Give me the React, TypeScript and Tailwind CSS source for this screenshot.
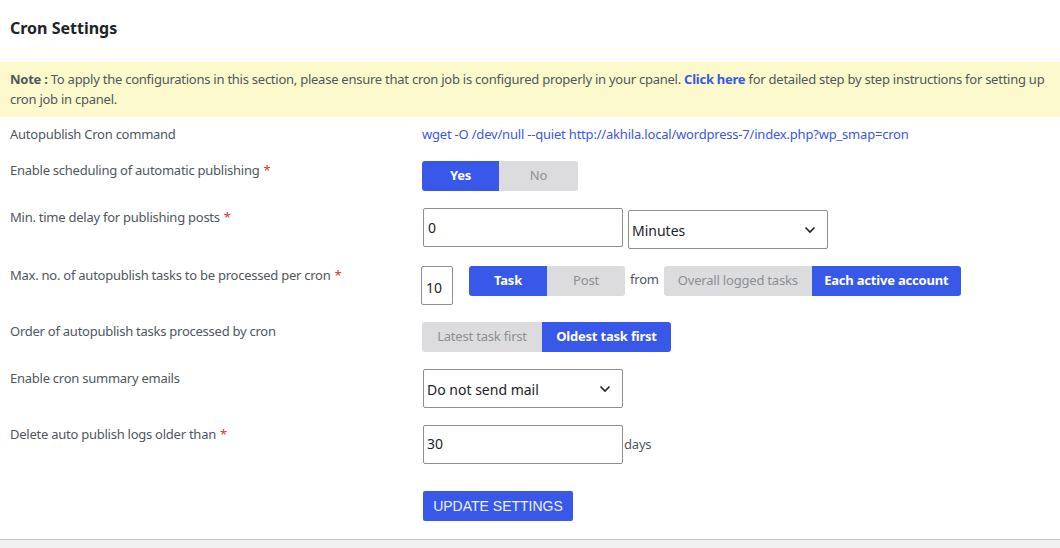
import React from "react";

const font = { fontFamily: '"Noto Sans", "Open Sans", sans-serif' };

function Chevron() {
  return (
    <svg width="12" height="8" viewBox="0 0 12 8" className="shrink-0">
      <path d="M1.5 1.5 L6 6 L10.5 1.5" fill="none" stroke="#1d2327" strokeWidth="1.6" />
    </svg>
  );
}

function Label({ text, req }: { text: string; req?: boolean }) {
  return (
    <div className="w-[422px] shrink-0 pl-[10px] text-[13px] leading-[18px] tracking-[-0.25px] text-[#50575e]">
      {text}
      {req && <span className="text-[#d63638] ml-[4px]">*</span>}
    </div>
  );
}

function Seg({ items, active, widths }: { items: string[]; active: number; widths: string[] }) {
  return (
    <div className="flex h-[30px] rounded-[3px] overflow-hidden shrink-0">
      {items.map((it, i) => (
        <div
          key={it}
          className={
            "flex items-center justify-center text-[13px] tracking-[-0.2px] " +
            widths[i] +
            " " +
            (i === active ? "bg-[#3858e9] text-white font-bold" : "bg-[#dcdcde] text-[#8c8f94]")
          }
        >
          {it}
        </div>
      ))}
    </div>
  );
}

export default function App() {
  return (
    <div className="w-[1060px] h-[548px] bg-white flex flex-col overflow-hidden" style={font}>
      <div className="h-[62px] pt-[18px] pl-[10px] text-[16px] leading-[20px] font-bold text-[#1d2327]">
        Cron Settings
      </div>
      <div className="bg-[#fcf9cd] h-[55px] pt-[7px] px-[10px] text-[13px] leading-[20px] tracking-[-0.25px] text-[#50575e]">
        <p>
          <b className="font-bold">Note :</b> To apply the configurations in this section, please ensure that cron job is configured properly in your cpanel. <b className="font-bold text-[#3858e9]">Click here</b> for detailed step by step instructions for setting up cron job in cpanel.
        </p>
      </div>

      <div className="flex flex-col pt-[8px]">
        <div className="flex items-start">
          <Label text="Autopublish Cron command" />
          <div className="text-[13px] leading-[18px] tracking-[-0.2px] text-[#3858e9]">
            wget -O /dev/null --quiet http://akhila.local/wordpress-7/index.php?wp_smap=cron
          </div>
        </div>

        <div className="flex items-start mt-[18px]">
          <Label text="Enable scheduling of automatic publishing" req />
          <Seg items={["Yes", "No"]} active={0} widths={["w-[77px]", "w-[79px]"]} />
        </div>

        <div className="flex items-start mt-[17px]">
          <Label text="Min. time delay for publishing posts" req />
          <div className="flex items-start ml-[1px]">
            <div className="w-[200px] h-[39px] border border-[#8c8f94] rounded-[2px] pl-[4px] flex items-center text-[14px] text-[#1d2327]">
              0
            </div>
            <div className="ml-[5px] mt-[2px] w-[200px] h-[39px] border border-[#8c8f94] rounded-[2px] pl-[3px] pr-[11px] flex items-center justify-between text-[14px] text-[#1d2327]">
              <span className="mt-[2px]">Minutes</span>
              <Chevron />
            </div>
          </div>
        </div>

        <div className="flex items-start mt-[17px]">
          <Label text="Max. no. of autopublish tasks to be processed per cron" req />
          <div className="flex items-start -ml-[1px]">
            <div className="w-[32px] h-[39px] border border-[#8c8f94] rounded-[2px] pl-[4px] flex items-center text-[14px] text-[#1d2327]">
              <span className="mt-[3px]">10</span>
            </div>
            <div className="ml-[16px]">
              <Seg items={["Task", "Post"]} active={0} widths={["w-[78px]", "w-[78px]"]} />
            </div>
            <div className="ml-[5px] h-[30px] flex items-center text-[13px] tracking-[-0.2px] text-[#50575e] -mt-[1px]">from</div>
            <div className="ml-[5px]">
              <Seg
                items={["Overall logged tasks", "Each active account"]}
                active={1}
                widths={["w-[148px]", "w-[149px]"]}
              />
            </div>
          </div>
        </div>

        <div className="flex items-start mt-[17px]">
          <Label text="Order of autopublish tasks processed by cron" />
          <Seg items={["Latest task first", "Oldest task first"]} active={1} widths={["w-[120px]", "w-[129px]"]} />
        </div>

        <div className="flex items-start mt-[17px]">
          <Label text="Enable cron summary emails" />
          <div className="ml-[1px] w-[200px] h-[39px] border border-[#8c8f94] rounded-[2px] pl-[3px] pr-[11px] flex items-center justify-between text-[14px] text-[#1d2327]">
            <span className="mt-[2px]">Do not send mail</span>
            <Chevron />
          </div>
        </div>

        <div className="flex items-start mt-[17px]">
          <Label text="Delete auto publish logs older than" req />
          <div className="flex items-center ml-[1px]">
            <div className="w-[200px] h-[39px] border border-[#8c8f94] rounded-[2px] pl-[3px] flex items-center text-[14px] text-[#1d2327]">
              <span className="-mt-[2px]">30</span>
            </div>
            <span className="ml-[1px] text-[13px] tracking-[-0.2px] text-[#50575e] mt-[1px]">days</span>
          </div>
        </div>
      </div>

      <div className="flex mt-[27px] pl-[423px]">
        <div
          className="w-[150px] h-[30px] bg-[#3858e9] rounded-[2px] flex items-center justify-center text-[14px] text-[#eef1fd]"
          style={{ fontFamily: '"Liberation Sans", Arial, sans-serif' }}
        >
          UPDATE SETTINGS
        </div>
      </div>

      <div className="mt-auto h-[9px] border-t border-[#c3c4c7] bg-[#f0f0f1]" />
    </div>
  );
}
